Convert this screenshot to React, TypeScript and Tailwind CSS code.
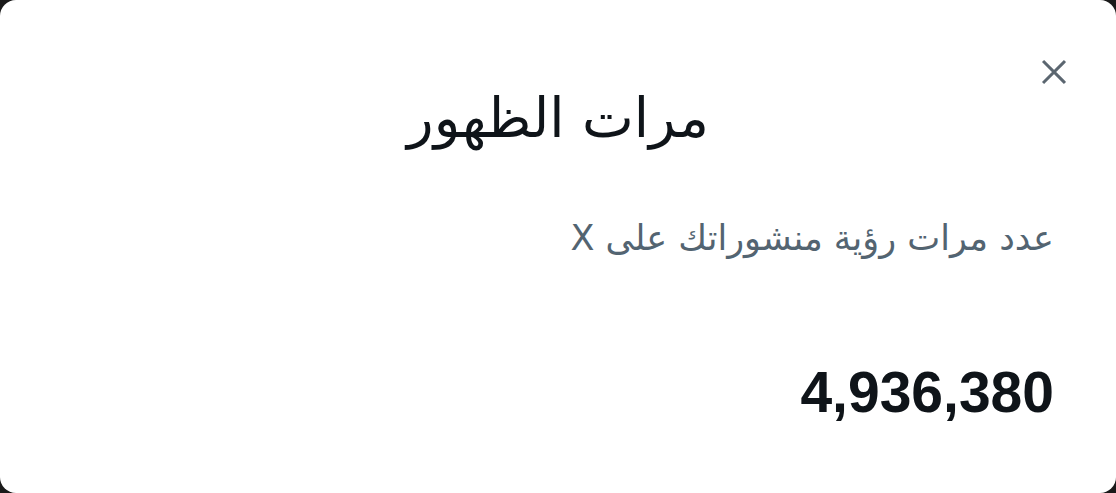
import React from "react";

export default function App() {
  return (
    <div className="w-[1116px] h-[493px] bg-[#1a1a1a]">
      <div
        dir="rtl"
        className="relative w-full h-full bg-white rounded-[16px] px-[62px] pt-[82px] font-['DejaVu_Sans',sans-serif]"
      >
        <button className="absolute right-[44px] top-[54px] w-[36px] h-[36px] flex items-center justify-center text-[#5b6670]">
          <svg width="34" height="34" viewBox="0 0 24 24" fill="none" stroke="currentColor" strokeWidth="2.1" strokeLinecap="square">
            <path d="M5 5L19 19M19 5L5 19" />
          </svg>
        </button>
        <h1 className="text-center text-[55px] leading-[72px] text-[#0f1419]">مرات الظهور</h1>
        <p className="mt-[60px] text-[35px] leading-[48px] text-[#536471]">عدد مرات رؤية منشوراتك على X</p>
        <div className="mt-[98px] text-[57px] leading-[64px] font-bold text-[#0f1419] font-['Liberation_Sans',sans-serif]">
          4,936,380
        </div>
      </div>
    </div>
  );
}
